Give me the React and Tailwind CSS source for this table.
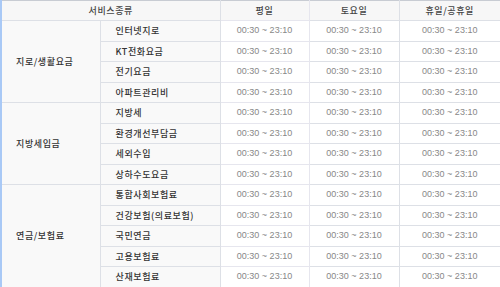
const groups = [
  { name: "지로/생활요금", items: ["인터넷지로", "KT전화요금", "전기요금", "아파트관리비"] },
  { name: "지방세입금", items: ["지방세", "환경개선부담금", "세외수입", "상하수도요금"] },
  { name: "연금/보험료", items: ["통합사회보험료", "건강보험(의료보험)", "국민연금", "고용보험료", "산재보험료"] },
];

const time = "00:30 ~ 23:10";

export default function App() {
  const ko = { fontFamily: '"Noto Sans CJK KR", "Liberation Sans", sans-serif' };
  const num = { fontFamily: '"Liberation Sans", Arial, sans-serif' };

  return (
    <div className="w-[500px] h-[287px] overflow-hidden bg-white border-l-2 border-[#a9c9f6]">
      <table className="w-[498px] table-fixed border-collapse border-t border-[#c8ccd3]" style={ko}>
        <colgroup>
          <col className="w-[98px]" />
          <col className="w-[120px]" />
          <col className="w-[89px]" />
          <col className="w-[90px]" />
          <col className="w-[101px]" />
        </colgroup>
        <thead>
          <tr className="h-[20px] bg-[#f7f7f7] text-[9px] font-medium text-[#444] tracking-[0.6px]">
            <th colSpan={2} className="border-b border-r border-[#dde0e6] font-medium">서비스종류</th>
            <th className="border-b border-r border-[#e6e6ee] font-medium">평일</th>
            <th className="border-b border-r border-[#dde0e6] font-medium">토요일</th>
            <th className="border-b border-[#dde0e6] font-medium">휴일/공휴일</th>
          </tr>
        </thead>
        <tbody>
          {groups.map((g) =>
            g.items.map((item, i) => (
              <tr key={item} className="h-[20.5px]">
                {i === 0 && (
                  <td
                    rowSpan={g.items.length}
                    className="bg-[#f9f9f9] border-b border-r border-[#dde0e6] pl-[14px] text-[9px] font-medium text-[#333] tracking-[0.6px]"
                  >
                    {g.name}
                  </td>
                )}
                <td className="bg-[#f9f9f9] border-b border-r border-[#dde0e6] pl-[15px] text-[9px] font-medium text-[#333] tracking-[0.6px]">
                  {item}
                </td>
                <td className="border-b border-r border-[#e6e6ee] text-center text-[9px] text-[#888]" style={num}>
                  {time}
                </td>
                <td className="border-b border-r border-[#dde0e6] text-center text-[9px] text-[#888]" style={num}>
                  {time}
                </td>
                <td className="border-b border-[#dde0e6] text-center text-[9px] text-[#888]" style={num}>
                  {time}
                </td>
              </tr>
            ))
          )}
        </tbody>
      </table>
    </div>
  );
}
